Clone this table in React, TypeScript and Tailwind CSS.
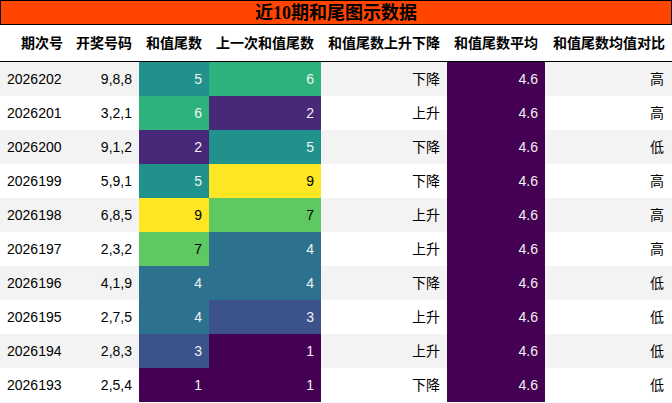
import React from "react";

const rows: [string, string, number, number, string, string][] = [
  ["2026202", "9,8,8", 5, 6, "下降", "高"],
  ["2026201", "3,2,1", 6, 2, "上升", "高"],
  ["2026200", "9,1,2", 2, 5, "下降", "低"],
  ["2026199", "5,9,1", 5, 9, "下降", "高"],
  ["2026198", "6,8,5", 9, 7, "上升", "高"],
  ["2026197", "2,3,2", 7, 4, "上升", "高"],
  ["2026196", "4,1,9", 4, 4, "下降", "低"],
  ["2026195", "2,7,5", 4, 3, "上升", "低"],
  ["2026194", "2,8,3", 3, 1, "上升", "低"],
  ["2026193", "2,5,4", 1, 1, "下降", "低"],
];

const viridis: Record<number, string> = {
  1: "bg-[#440154] text-[#f1f1f1]",
  2: "bg-[#482878] text-[#f1f1f1]",
  3: "bg-[#3b528b] text-[#f1f1f1]",
  4: "bg-[#2c728e] text-[#f1f1f1]",
  5: "bg-[#21918c] text-[#f1f1f1]",
  6: "bg-[#2db27d] text-[#f1f1f1]",
  7: "bg-[#5ec962] text-black",
  8: "bg-[#aadc32] text-black",
  9: "bg-[#fde725] text-black",
};

const headers = [
  "期次号",
  "开奖号码",
  "和值尾数",
  "上一次和值尾数",
  "和值尾数上升下降",
  "和值尾数平均",
  "和值尾数均值对比",
];

const grid = "grid grid-cols-[70px_69px_70px_112px_126px_98px_127px]";

export default function App() {
  return (
    <div
      className="w-[672px] bg-white text-[14px] text-black"
      style={{ fontFamily: '"Liberation Sans", "Noto Sans CJK SC", sans-serif' }}
    >
      <div
        className="h-[25px] border border-black bg-[#ff4500] flex items-center justify-center text-[18px] font-bold leading-none"
        style={{ fontFamily: '"Liberation Serif", "Noto Sans CJK SC", serif' }}
      >
        近10期和尾图示数据
      </div>
      <div className={`${grid} h-[37px] border-b border-black font-bold`}>
        {headers.map((h) => (
          <div key={h} className="flex items-center justify-end pr-[7px] whitespace-nowrap">
            {h}
          </div>
        ))}
      </div>
      {rows.map((r, i) => (
        <div
          key={r[0]}
          className={`${grid} h-[34px] ${i % 2 === 0 ? "bg-[#f3f3f3]" : "bg-white"}`}
        >
          <div className="flex items-center pl-[7px]">{r[0]}</div>
          <div className="flex items-center justify-end pr-[7px]">{r[1]}</div>
          <div className={`flex items-center justify-end pr-[7px] ${viridis[r[2]]}`}>{r[2]}</div>
          <div className={`flex items-center justify-end pr-[7px] ${viridis[r[3]]}`}>{r[3]}</div>
          <div className="flex items-center justify-end pr-[7px]">{r[4]}</div>
          <div className="flex items-center justify-end pr-[7px] bg-[#440154] text-[#f1f1f1]">4.6</div>
          <div className="flex items-center justify-end pr-[8px]">{r[5]}</div>
        </div>
      ))}
    </div>
  );
}
